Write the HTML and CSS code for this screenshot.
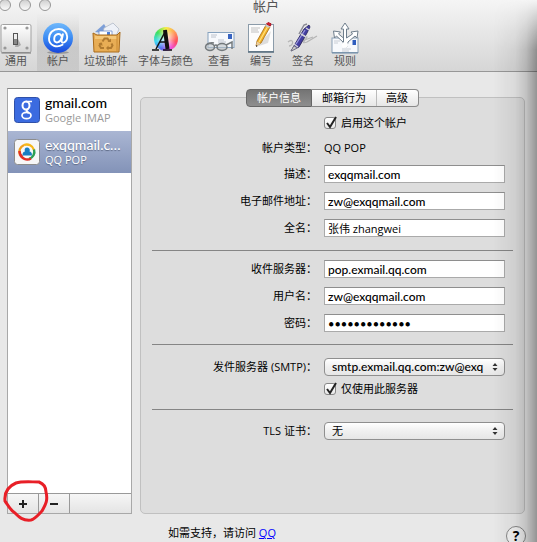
FILE: index.html
```html
<!DOCTYPE html>
<html lang="zh-CN">
<head>
    <meta charset="utf-8">
    <title>帐户</title>
    <link rel="stylesheet" href="styles.css">
</head>
<body>
    <header class="header">
        <div class="titlebar">
            <div class="lights"><i class="light"></i><i class="light"></i><i class="light"></i></div>
            <h1 class="title">帐户</h1>
        </div>
        <nav class="toolbar">
            <button class="tool" type="button">
                <svg class="icon" viewBox="0 0 32 32">
                    <defs><linearGradient id="plate" x2="0" y2="1"><stop offset="0" stop-color="#fff"/><stop offset="1" stop-color="#d6d6d6"/></linearGradient></defs>
                    <rect x="1" y="2.5" width="30" height="28" rx="1.5" fill="url(#plate)" stroke="#a2a2a2"/>
                    <path d="M1.5 31h29.5" stroke="#777"/>
                    <g fill="#999"><circle cx="5" cy="6" r="1.6"/><circle cx="27" cy="6" r="1.6"/><circle cx="5" cy="26" r="1.6"/><circle cx="27" cy="26" r="1.6"/></g>
                    <path d="M17 15l4 8-3 2h-3z" fill="#aaa"/>
                    <rect x="13.5" y="11.500" width="4" height="11" fill="#eee" stroke="#555"/>
                    <path d="M14 17h3v5h-3z" fill="#888"/>
                </svg>
                <span>通用</span>
            </button>
            <button class="tool tool-active" type="button">
                <svg class="icon" viewBox="0 0 32 32">
                    <defs><linearGradient id="ball" x2="0" y2="1"><stop offset="0" stop-color="#6fb8fb"/><stop offset=".5" stop-color="#3c8cf3"/><stop offset="1" stop-color="#1645dc"/></linearGradient></defs>
                    <ellipse cx="16" cy="30.500" rx="11" ry="1.500" fill="#999"/>
                    <circle cx="16" cy="16" r="15" fill="url(#ball)"/>
                    <g fill="none" stroke="#fff" stroke-width="1.9" stroke-linecap="round">
                        <path d="M20.500 22.800c-6 3.600-13.500.5-13.500-6C7 10.500 11.500 7 16.700 7c5 0 8.500 3.200 8.500 7.800 0 6.200-6.400 7.400-5.600 3.700l1.300-6.300"/>
                        <path d="M19.800 15.800c0-6-7.600-4.500-7.600 1.400 0 5 6.200 3.800 7.200-1"/>
                    </g>
                </svg>
                <span>帐户</span>
            </button>
            <button class="tool" type="button">
                <svg class="icon" viewBox="0 0 32 32">
                    <path d="M5 10l9-8 6 10z" fill="#7d9fd8"/>
                    <path d="M14 6l9-5 6 6-3 7H12z" fill="#eef1f7" stroke="#a9b2c2" stroke-width=".7"/>
                    <path d="M9 9h13v5H9z" fill="#fff" stroke="#6d8ecb" stroke-width=".8"/>
                    <path d="M17 10h3v3h-3z" fill="#4d7ed6"/>
                    <path d="M3 11l4 2h20l3-3-1 20H4z" fill="#e8ad55" stroke="#a86a1b"/>
                    <path d="M5 14h22v3H5z" fill="#f5c778"/>
                    <path d="M27 13v17" stroke="#c98a35"/>
                    <g fill="none" stroke="#b07a30" stroke-width="2">
                        <path d="M12.500 19.500l2-3h3l2 3"/><path d="M21.500 21.500l1 2-1.500 2.500h-3"/><path d="M14 26h-3l-1.500-2.500 1.500-2.500"/>
                    </g>
                    <path d="M17.500 20h3.500v-3.500zM18.500 23.500l-2.500 2.500 2.500 2.500zM8.500 21.500l3.500-1 .5 3.500z" fill="#b07a30"/>
                </svg>
                <span>垃圾邮件</span>
            </button>
            <button class="tool" type="button">
                <span class="icon fonts-icon">
                    <i class="wheel"></i>
                    <svg class="wheel-letter" viewBox="0 0 32 32">
                        <g fill="none" stroke="#111"><path d="M16 8L6 27" stroke-width="1.500"/><path d="M15 8l2.500 19" stroke-width="4"/><path d="M10 20h7" stroke-width="1.500"/><path d="M2 28h7M13 28h9" stroke-width="1.500"/></g>
                    </svg>
                </span>
                <span>字体与颜色</span>
            </button>
            <button class="tool" type="button">
                <svg class="icon" viewBox="0 0 32 32">
                    <rect x="5" y="10.500" width="26" height="15" fill="#f7f9fc" stroke="#86a2be"/>
                    <path d="M8 13h6M8 15h5M15 18h6M15 20h8" stroke="#adb5c0" stroke-width=".8"/>
                    <path d="M25 12h4v5h-4z" fill="#3864c1"/>
                    <g fill="#bdc3c8" fill-opacity=".6" stroke="#747a7d" stroke-width="1.500">
                        <ellipse cx="7" cy="25" rx="4.500" ry="3.500"/><ellipse cx="19" cy="25" rx="5" ry="3.500"/>
                        <path d="M11 24q2-2 3.500 0M3 23q4-3 8-2M23 23l6-3v7" fill="none"/>
                    </g>
                </svg>
                <span>查看</span>
            </button>
            <button class="tool" type="button">
                <svg class="icon" viewBox="0 0 32 32">
                    <rect x="3.500" y="2.500" width="25" height="27" fill="#fcfcfc" stroke="#8b9ba9"/>
                    <path d="M3 30h26" stroke="#566c7e" stroke-width="1.500"/>
                    <path d="M6 6h9M6 8h7M6 10h8" stroke="#a6a6a6" stroke-width=".7"/>
                    <path d="M11 25L26 9l-3 12z" fill="#ddd"/>
                    <path d="M11 24l1-5L21 3l4 2-9 16z" fill="#f2b229" stroke="#a36b15" stroke-width=".8"/>
                    <path d="M14 20l9-16" stroke="#ffe07a" stroke-width="1.200"/>
                    <path d="M20 4l1.500-2.500 4 2L24 6z" fill="#c8c8c8"/>
                    <path d="M21.500 2l1.500-1.500 3 1.200L25.500 4z" fill="#d82030" stroke="#b11c28"/>
                    <path d="M11 24.500l1-5 3.500 2z" fill="#e9cda0"/><path d="M11 25v-2l1.500 1z" fill="#222"/>
                </svg>
                <span>编写</span>
            </button>
            <button class="tool" type="button">
                <svg class="icon" viewBox="0 0 32 32">
                    <path d="M1 20c6-5 6 4 1 4M8 25c7 1 8-12 12-10-3 5-6 7 0 5l10-6M12 20l14-5" fill="none" stroke="#b5b5b5" stroke-width="1.300"/>
                    <path d="M4 29l4-7L17 7l5-4 1 2-3 6-8 14z" fill="#433ea0" stroke="#252157" stroke-width=".8"/>
                    <path d="M9 22L18 8" stroke="#9b98dd" stroke-width="1.300"/>
                    <path d="M12 12l5-9 3-1" fill="none" stroke="#8b8b95" stroke-width="1.500"/>
                    <path d="M14 12l5 3M7 22l4 3M19 6l3 2" stroke="#d2d2da" stroke-width="1.500"/>
                    <path d="M4 29l3-5 3 2z" fill="#ccc" stroke="#777" stroke-width=".5"/>
                </svg>
                <span>签名</span>
            </button>
            <button class="tool" type="button">
                <svg class="icon" viewBox="0 0 32 32">
                    <rect x="3" y="16" width="26" height="14.500" fill="#f7f9fc" stroke="#8aa0b5"/>
                    <path d="M3 31h26" stroke="#6c8aa5"/>
                    <path d="M5 19h6M5 21h4M13 27h9M13 29h7" stroke="#bcc3cb" stroke-width=".8"/>
                    <path d="M23.500 18h3.500v5h-3.500z" fill="#2f5dbe"/>
                    <path d="M14.500 21V7H12l4-6 4 6h-2.500v9l6-4-1.500-2 7-1-1 7-2-2-7 6-1 5h-3l-1-5-6.500-6-2 2-1-7 7 1-2 2 5 4z" fill="#fff" stroke="#6f7e8c"/>
                    <circle cx="16" cy="23" r="3" fill="#fff"/>
                </svg>
                <span>规则</span>
            </button>
        </nav>
    </header>

    <main class="main">
        <aside class="sidebar">
            <ul class="accounts">
                <li class="account">
                    <svg class="logo" viewBox="0 0 26 26">
                        <rect x=".5" y=".5" width="25" height="25" rx="3" fill="#3b6be0" stroke="#2f50a8"/>
                        <g fill="none" stroke="#fff">
                            <ellipse cx="12" cy="8.500" rx="3.500" ry="4" stroke-width="2"/>
                            <path d="M12 4.500h6" stroke-width="1.500"/>
                            <path d="M14 12c-3 2-1 2.500 1 4" stroke-width="2"/>
                            <ellipse cx="12.500" cy="18.500" rx="4.500" ry="3.200" stroke-width="1.700"/>
                        </g>
                    </svg>
                    <div class="account-text"><strong class="account-name">gmail.com</strong><span class="account-kind">Google IMAP</span></div>
                </li>
                <li class="account account-selected">
                    <svg class="logo" viewBox="0 0 26 26">
                        <rect x=".5" y=".5" width="25" height="25" rx="3" fill="#f7f7f7" stroke="#8c8c8c"/>
                        <g fill="none" stroke-width="2.400">
                            <path d="M10 6a7.500 7.500 0 0 1 10 5" stroke="#f6b718"/>
                            <path d="M20 10.500a7.500 7.500 0 0 1-5 9.500" stroke="#2ba052"/>
                            <path d="M17 19.500A7.500 7.500 0 0 1 6 15" stroke="#e12f25"/>
                            <path d="M6 16a7.500 7.500 0 0 1 4-10" stroke="#f0a01c"/>
                            <path d="M5.500 12a7.500 7.500 0 0 0 3 6" stroke="#e12f25"/>
                        </g>
                        <path d="M8.500 16.500c0-3 1-4 2.500-4-1-2 0-4 2-4s3.500 2 2.500 4c1.500 0 2.500 1 2.500 4z" fill="#187dc2"/>
                    </svg>
                    <div class="account-text"><strong class="account-name">exqqmail.com</strong><span class="account-kind">QQ POP</span></div>
                </li>
            </ul>
            <div class="actions">
                <button class="action" type="button" aria-label="添加"><svg viewBox="0 0 10 10"><path d="M1 5h8M5 1v8"/></svg></button>
                <button class="action" type="button" aria-label="删除"><svg viewBox="0 0 10 10"><path d="M1 5h8"/></svg></button>
                <svg class="mark" viewBox="0 0 46 44"><path d="M13 4c6-2 15-1 23-1 5 2 7 6 7 10 2 8 0 12-4 19-4 4-7 8-11 9-9 1-13-4-16-7C7 31 5 26 2 22 1 12 6 7 13 4z"/></svg>
            </div>
        </aside>

        <section class="panel">
            <div class="tabs">
                <button class="tab tab-active" type="button">帐户信息</button>
                <button class="tab" type="button">邮箱行为</button>
                <button class="tab tab-last" type="button">高级</button>
            </div>
            <form class="form">
                <div class="group group-first">
                    <label class="check"><input type="checkbox" checked><svg class="tick" viewBox="0 0 16 16"><path d="M4 8l3 4 6-10"/></svg>启用这个帐户</label>
                    <span class="label">帐户类型：</span>
                    <span class="value">QQ POP</span>
                    <label class="label" for="desc">描述：</label>
                    <input class="field" id="desc" type="text" value="exqqmail.com">
                    <label class="label" for="email">电子邮件地址：</label>
                    <input class="field" id="email" type="text" value="zw@exqqmail.com">
                    <label class="label" for="fullName">全名：</label>
                    <input class="field regular" id="fullName" type="text" value="张伟 zhangwei">
                </div>
                <div class="group">
                    <label class="label" for="server">收件服务器：</label>
                    <input class="field" id="server" type="text" value="pop.exmail.qq.com">
                    <label class="label" for="user">用户名：</label>
                    <input class="field" id="user" type="text" value="zw@exqqmail.com">
                    <label class="label" for="password">密码：</label>
                    <input class="field field-password" id="password" type="password" value="1234567890123">
                </div>
                <div class="group group-smtp">
                    <label class="label" for="smtp">发件服务器 (SMTP)：</label>
                    <span class="popup">
                        <select class="select" id="smtp"><option>smtp.exmail.qq.com:zw@exq</option></select>
                        <svg class="arrows" viewBox="0 0 6 8"><path d="M3 0l2.500 3h-5zM3 8L.5 5h5z"/></svg>
                    </span>
                    <label class="check"><input type="checkbox" checked><svg class="tick" viewBox="0 0 16 16"><path d="M4 8l3 4 6-10"/></svg>仅使用此服务器</label>
                </div>
                <div class="group">
                    <label class="label" for="tls">TLS 证书：</label>
                    <span class="popup">
                        <select class="select regular" id="tls"><option>无</option></select>
                        <svg class="arrows" viewBox="0 0 6 8"><path d="M3 0l2.500 3h-5zM3 8L.5 5h5z"/></svg>
                    </span>
                </div>
            </form>
        </section>
    </main>

    <footer class="footer">
        <p class="support">如需支持，请访问 <a href="#">QQ</a></p>
        <button class="help" type="button">?</button>
    </footer>
</body>
</html>
```
FILE: styles.css
```css
* {
    box-sizing: border-box;
}
body {
    position: relative;
    margin: 0;
    height: 100vh;
    overflow: hidden;
    background: #e8e8e8;
    color: #000;
    font: 11px/16px "Open Sans", "Noto Sans CJK SC", sans-serif;
}
/* shadow along the right edge */
body::after {
    content: "";
    position: absolute;
    inset: 0 0 0 auto;
    width: 44px;
    background: linear-gradient(to right, transparent, rgba(0, 0, 0, 0.06) 50%, rgba(0, 0, 0, 0.16) 75%, rgba(0, 0, 0, 0.36));
    -webkit-mask-image: linear-gradient(transparent, #000 50px);
    mask-image: linear-gradient(transparent, #000 50px);
    pointer-events: none;
}
button, input, select {
    margin: 0;
    color: inherit;
    font: inherit;
}

/* title and toolbar */
.header {
    height: 72px;
    border-bottom: 1px solid #979797;
    background: linear-gradient(#f5f5f5, #d6d6d6);
}
.titlebar {
    position: relative;
    height: 13px;
}
.lights {
    position: absolute;
    top: -1px;
    left: -1px;
    display: flex;
    gap: 8px;
}
.light {
    width: 12px;
    height: 12px;
    border: 1px solid #969696;
    border-radius: 50%;
    background: linear-gradient(#d0d0d0, #fafafa);
}
.title {
    margin: 0;
    padding-right: 5px;
    color: #555;
    font-size: 13px;
    font-weight: 400;
    line-height: 12px;
    text-align: center;
}
.toolbar {
    display: flex;
    margin-left: -5px;
}
.tool {
    display: flex;
    flex-direction: column;
    align-items: center;
    min-width: 42px;
    height: 58px;
    padding: 9px 5px 0;
    border: 0;
    background: none;
    color: #555;
    line-height: 14px;
    white-space: nowrap;
}
.tool-active {
    background: linear-gradient(rgba(0, 0, 0, 0), rgba(0, 0, 0, 0.1) 60%, rgba(0, 0, 0, 0.06));
}
.icon {
    width: 32px;
    height: 32px;
}
.fonts-icon {
    position: relative;
    padding: 5px 0 0 4px;
}
.wheel {
    display: block;
    width: 24px;
    height: 24px;
    border-radius: 50%;
    background: radial-gradient(rgba(255, 255, 255, 0.9), rgba(255, 255, 255, 0) 60%), conic-gradient(#f8ee45, #ff9c5c, #ff4a5a, #ee52e8, #5a6cf0, #3fd8f2, #3ee05d, #f8ee45);
}
.wheel-letter {
    position: absolute;
    inset: 0;
}

/* account list */
.main {
    display: grid;
    grid-template-columns: 125px 1fr;
    gap: 8px;
    padding: 16px 12px 0 7px;
}
.sidebar {
    display: flex;
    flex-direction: column;
    border: 1px solid #a8a8a8;
    border-top-color: #888;
    background: #fff;
}
.accounts {
    flex: 1;
    margin: 0;
    padding: 0;
    list-style: none;
}
.account {
    display: flex;
    align-items: center;
    gap: 5px;
    height: 42px;
    padding: 0 3px 0 6px;
}
.logo {
    flex: none;
    width: 26px;
    height: 26px;
}
.account-text {
    display: flex;
    flex-direction: column;
    min-width: 0;
}
.account-name {
    overflow: hidden;
    font-family: Lato, sans-serif;
    font-size: 14px;
    font-weight: 500;
    line-height: 16px;
    text-overflow: ellipsis;
}
.account-kind {
    color: #999;
    line-height: 14px;
}
.account-selected {
    background: linear-gradient(#aab6d3, #8393b8);
    color: #fff;
    text-shadow: 0 1px 1px #5c6884;
}
.account-selected .account-kind {
    color: #fff;
}
.actions {
    position: relative;
    display: flex;
    height: 20px;
    border-top: 1px solid #999;
    background: linear-gradient(#f6f6f6, #e4e4e4);
}
.action {
    display: grid;
    place-items: center;
    width: 31px;
    padding: 0;
    border: 0;
    border-right: 1px solid #999;
    background: none;
}
.action svg {
    width: 10px;
    height: 10px;
    fill: none;
    stroke: #222;
    stroke-width: 2;
}
.mark {
    position: absolute;
    top: -15px;
    left: -5px;
    width: 46px;
    height: 44px;
    fill: none;
    stroke: #e81f27;
    stroke-width: 3;
    pointer-events: none;
}

/* settings panel */
.panel {
    margin-top: 9px;
    padding: 0 11px 73px;
    border: 1px solid #c0c0c0;
    border-radius: 5px;
    background: #ddd;
}
.tabs {
    display: flex;
    justify-content: center;
    margin-top: -9px;
}
.tab {
    height: 18px;
    padding: 0 10px;
    border: 1px solid #8a8a8a;
    border-width: 1px 0;
    background: linear-gradient(#fff, #f2f2f2 50%, #e6e6e6);
    line-height: 16px;
}
.tab-active {
    border-width: 1px;
    border-color: #666;
    border-radius: 4px 0 0 4px;
    background: linear-gradient(#747474, #8e8e8e);
    color: #fff;
}
.tab-last {
    border-right-width: 1px;
    border-radius: 0 4px 4px 0;
    box-shadow: inset 1px 0 #bbb;
}
.group {
    display: grid;
    grid-template-columns: 165px 1fr;
    align-items: center;
    gap: 9px 7px;
    padding: 9px 8px 12px 0;
    border-top: 1px solid #858585;
}
.group-first {
    padding: 8px 8px 13px 0;
    border-top: 0;
}
.group-smtp {
    row-gap: 5px;
    padding: 13px 8px 12px 0;
}
.group:last-child {
    padding: 12px 8px 0 0;
}
.label {
    text-align: right;
}
.field {
    width: 100%;
    height: 18px;
    padding: 0 3px;
    border: 1px solid #aaa;
    border-top-color: #8e8e8e;
    background: #fff;
    font-family: Lato, "Noto Sans CJK SC", sans-serif;
    font-size: 12px;
    font-weight: 500;
}
.field-password {
    font-size: 11px;
}
.check {
    position: relative;
    grid-column: 2;
    display: flex;
    align-items: center;
    gap: 5px;
}
.check input {
    width: 12px;
    height: 12px;
    border: 1px solid #888;
    border-radius: 3px;
    background: linear-gradient(#fff, #e8e8e8);
    appearance: none;
}
.tick {
    position: absolute;
    top: 0;
    left: -1px;
    width: 16px;
    height: 16px;
    fill: none;
    stroke: #222;
    stroke-width: 2;
    pointer-events: none;
}
.popup {
    position: relative;
    display: flex;
}
.select {
    width: 100%;
    height: 18px;
    padding: 0 16px 0 7px;
    border: 1px solid #8f8f8f;
    border-radius: 4px;
    background: linear-gradient(#fff, #f0f0f0 50%, #e6e6e6);
    font-family: Lato, "Noto Sans CJK SC", sans-serif;
    font-size: 12px;
    font-weight: 500;
    line-height: 16px;
    appearance: none;
}
.regular {
    font-size: 11px;
    font-family: "Open Sans", "Noto Sans CJK SC", sans-serif;
    font-weight: 400;
}
.arrows {
    position: absolute;
    top: 5px;
    right: 7px;
    width: 6px;
    height: 8px;
    fill: #333;
    pointer-events: none;
}

/* footer */
.footer {
    display: flex;
    justify-content: space-between;
    align-items: flex-start;
    padding: 11px 11px 0 168px;
}
.support {
    margin: 0;
}
.support a {
    color: #00f;
}
.help {
    width: 20px;
    height: 20px;
    margin-top: 1px;
    padding: 0;
    border: 1px solid #888;
    border-radius: 50%;
    background: #f2f2f2;
    font-size: 14px;
    font-weight: 700;
    line-height: 18px;
}
```
